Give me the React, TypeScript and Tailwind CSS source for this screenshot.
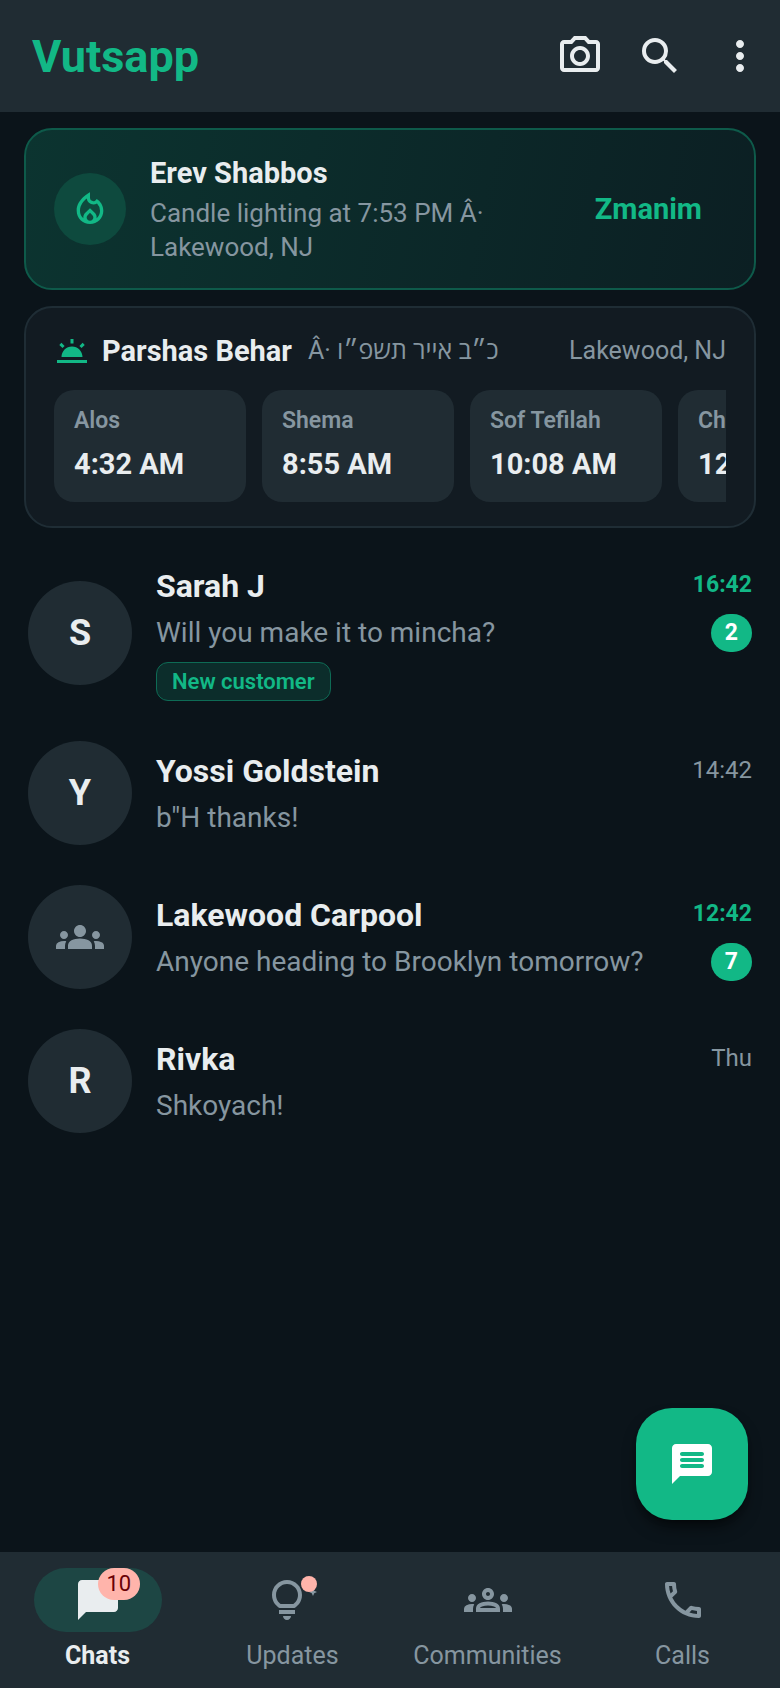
import { useState, type ReactNode } from 'react';
import clsx from 'clsx';
import {
    MdChatBubble,
    MdGroups,
    MdMoreVert,
    MdOutlineCall,
    MdOutlineGroups,
    MdOutlineLocalFireDepartment,
    MdOutlinePhotoCamera,
    MdOutlineTipsAndUpdates,
    MdSearch,
    MdWbTwilight,
} from 'react-icons/md';

interface Chat {
    name: string;
    message: string;
    time: string;
    unread?: number;
    tag?: string;
    group?: boolean;
}

const CHATS: Chat[] = [
    { name: 'Sarah J', message: 'Will you make it to mincha?', time: '16:42', unread: 2, tag: 'New customer' },
    { name: 'Yossi Goldstein', message: 'b"H thanks!', time: '14:42' },
    { name: 'Lakewood Carpool', message: 'Anyone heading to Brooklyn tomorrow?', time: '12:42', unread: 7, group: true },
    { name: 'Rivka', message: 'Shkoyach!', time: 'Thu' },
];

const ZMANIM = [
    { label: 'Alos', time: '4:32 AM' },
    { label: 'Shema', time: '8:55 AM' },
    { label: 'Sof Tefilah', time: '10:08 AM' },
    { label: 'Chatzos', time: '12:53 PM' },
];

function MessageIcon({ className }: { className?: string }) {
    return (
        <svg viewBox="0 0 24 24" fill="currentColor" className={className} aria-hidden="true">
            <path d="M20 2H4c-1.1 0-2 .9-2 2v18l4-4h14c1.1 0 2-.9 2-2V4c0-1.1-.9-2-2-2zm-3 12H7c-.55 0-1-.45-1-1s.45-1 1-1h10c.55 0 1 .45 1 1s-.45 1-1 1zm0-3H7c-.55 0-1-.45-1-1s.45-1 1-1h10c.55 0 1 .45 1 1s-.45 1-1 1zm0-3H7c-.55 0-1-.45-1-1s.45-1 1-1h10c.55 0 1 .45 1 1s-.45 1-1 1z" />
        </svg>
    );
}

function Header() {
    return (
        <header className="flex h-28 items-center justify-between bg-[#202c33] pl-8">
            <h1 className="text-[45px] font-bold leading-none text-[#12b886]">Vutsapp</h1>
            <div className="flex text-[#e9edef]">
                <button type="button" aria-label="Camera" className="flex size-20 items-center justify-center">
                    <MdOutlinePhotoCamera className="size-12" />
                </button>
                <button type="button" aria-label="Search" className="flex size-20 items-center justify-center">
                    <MdSearch className="size-12" />
                </button>
                <button type="button" aria-label="More" className="flex size-20 items-center justify-center">
                    <MdMoreVert className="size-12" />
                </button>
            </div>
        </header>
    );
}

function ShabbosCard() {
    return (
        <section className="flex items-center gap-6 rounded-[28px] border-2 border-[#0e5a4a] bg-linear-[102deg] from-[#0c3430] to-[#0c1f23] px-7 py-6">
            <div className="flex size-18 shrink-0 items-center justify-center rounded-full bg-[#0e4a3e]">
                <MdOutlineLocalFireDepartment className="size-10 text-[#12b886]" />
            </div>
            <div className="min-w-0 flex-1">
                <h2 className="text-[29px] font-bold leading-[38px] text-[#e9edef]">Erev Shabbos</h2>
                <p className="mt-1 text-[26px] leading-[34px] text-[#8696a0]">Candle lighting at 7:53 PM Â· Lakewood, NJ</p>
            </div>
            <button type="button" className="shrink-0 px-6 text-[29px] font-bold leading-[38px] text-[#12b886]">
                Zmanim
            </button>
        </section>
    );
}

function ZmanimCard() {
    return (
        <section className="mt-4 rounded-[28px] border-2 border-[#1f2d35] bg-[#121b22] px-7 py-6">
            <div className="flex items-center">
                <MdWbTwilight className="size-9 text-[#12b886]" />
                <h2 className="ml-3 text-[29px] font-bold leading-[38px] text-[#e9edef]">Parshas Behar</h2>
                <p className="ml-4 flex-1 text-[25px] leading-[38px] text-[#8696a0]">Â· כ״ב אייר תשפ״ו</p>
                <p className="text-[25px] leading-[38px] text-[#8696a0]">Lakewood, NJ</p>
            </div>
            <ul className="mt-5 flex gap-4 overflow-x-auto [scrollbar-width:none]">
                {ZMANIM.map((z) => (
                    <li key={z.label} className="h-28 w-48 shrink-0 rounded-[20px] bg-[#202c33] px-5 py-4">
                        <p className="text-[23px] font-semibold leading-[30px] text-[#8696a0]">{z.label}</p>
                        <p className="mt-2 whitespace-nowrap text-[29px] font-bold leading-10 text-[#e9edef]">{z.time}</p>
                    </li>
                ))}
            </ul>
        </section>
    );
}

function ChatRow({ chat }: { chat: Chat }) {
    return (
        <li>
            <a href="#chat" className="flex items-center gap-6 px-7 py-5">
                <div className="flex size-26 shrink-0 items-center justify-center rounded-full bg-[#202c33] text-4xl font-bold text-[#e9edef]">
                    {chat.group ? <MdGroups className="size-12 text-[#8696a0]" /> : chat.name[0]}
                </div>
                <div className="min-w-0 flex-1">
                    <div className="flex items-start justify-between">
                        <h3 className="text-[32px] font-bold leading-[44px] text-[#e9edef]">{chat.name}</h3>
                        <time
                            className={clsx(
                                chat.unread
                                    ? 'text-[23px] font-bold leading-[42px] text-[#12b886]'
                                    : 'text-2xl leading-[42px] text-[#8696a0]'
                            )}
                        >
                            {chat.time}
                        </time>
                    </div>
                    <div className="mt-[6px] flex items-center justify-between">
                        <p className="truncate text-[28px] leading-[38px] text-[#8696a0]">{chat.message}</p>
                        {chat.unread && (
                            <span className="rounded-full bg-[#12b886] px-[14px] py-[5px] text-[23px] font-bold leading-7 text-white">
                                {chat.unread}
                            </span>
                        )}
                    </div>
                    {chat.tag && (
                        <div className="mt-[10px] flex">
                            <span className="rounded-xl border border-[#0e6b55] bg-[#0c2d2b] px-[15px] text-[22px] font-semibold leading-[37px] text-[#12b886]">
                                {chat.tag}
                            </span>
                        </div>
                    )}
                </div>
            </a>
        </li>
    );
}

interface TabProps {
    label: string;
    icon: ReactNode;
    badge?: ReactNode;
    active: boolean;
    onSelect: () => void;
}

function Tab({ label, icon, badge, active, onSelect }: TabProps) {
    return (
        <button
            type="button"
            onClick={onSelect}
            className={clsx('flex flex-1 flex-col items-center gap-2', active ? 'font-bold text-[#e9edef]' : 'text-[#8696a0]')}
        >
            <span className={clsx('flex h-16 w-32 items-center justify-center rounded-full', active && 'bg-[#1d4644]')}>
                <span className="relative">
                    {icon}
                    {badge}
                </span>
            </span>
            <span className="text-[25px] leading-8">{label}</span>
        </button>
    );
}

function BottomNav() {
    const [tab, setTab] = useState('Chats');

    const tabs = [
        {
            label: 'Chats',
            icon: <MdChatBubble className="size-12" />,
            badge: (
                <span className="absolute -top-2 left-6 rounded-full bg-[#ffb4ab] px-[9px] text-[22px] font-normal leading-8 text-[#690005]">
                    10
                </span>
            ),
        },
        {
            label: 'Updates',
            icon: <MdOutlineTipsAndUpdates className="size-12" />,
            badge: <span className="absolute right-0 top-0 size-4 rounded-full bg-[#ffb4ab]" />,
        },
        { label: 'Communities', icon: <MdOutlineGroups className="size-12" /> },
        { label: 'Calls', icon: <MdOutlineCall className="size-12" /> },
    ];

    return (
        <nav className="flex bg-[#202c33] py-4">
            {tabs.map((t) => (
                <Tab key={t.label} {...t} active={tab === t.label} onSelect={() => setTab(t.label)} />
            ))}
        </nav>
    );
}

export default function App() {
    return (
        <div className="flex min-h-screen flex-col bg-[#0b141a] font-[Roboto,'Open_Sans','Noto_Sans',sans-serif]">
            <Header />
            <main className="relative flex-1">
                <div className="px-6 py-4">
                    <ShabbosCard />
                    <ZmanimCard />
                </div>
                <ul>
                    {CHATS.map((chat) => (
                        <ChatRow key={chat.name} chat={chat} />
                    ))}
                </ul>
                {/* New chat */}
                <button
                    type="button"
                    aria-label="New chat"
                    className="absolute bottom-8 right-8 flex size-28 items-center justify-center rounded-[36px] bg-[#12b886] text-white shadow-lg shadow-black/50"
                >
                    <MessageIcon className="size-12" />
                </button>
            </main>
            <BottomNav />
        </div>
    );
}
